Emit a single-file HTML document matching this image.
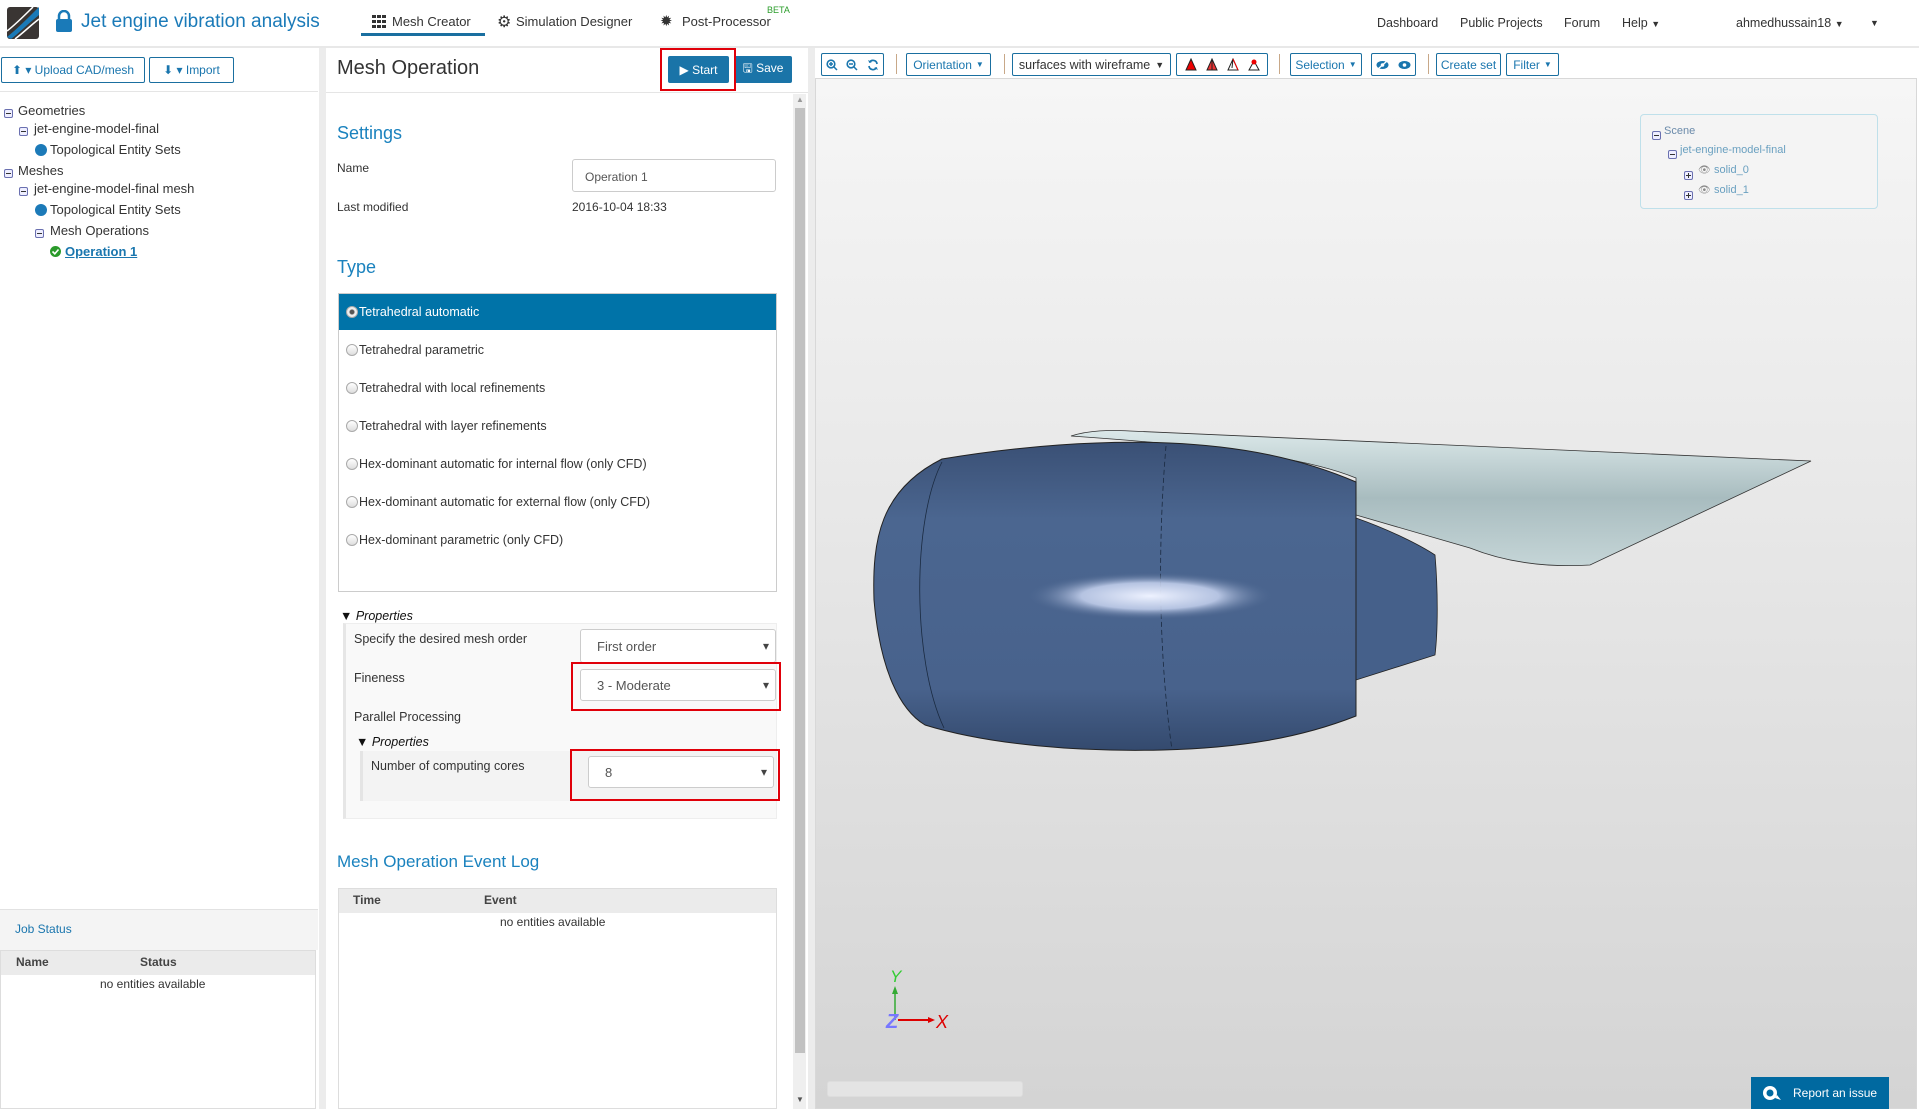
<!DOCTYPE html>
<html><head><meta charset="utf-8"><style>
*{box-sizing:border-box;margin:0;padding:0}
body{width:1919px;height:1109px;overflow:hidden;background:#fff;font-family:"Liberation Sans",Arial,sans-serif;font-size:13px;color:#333;position:relative}
.a{position:absolute;white-space:nowrap}
.btn{position:absolute;border:1px solid #1a6fa0;border-radius:2px;color:#1a76ae;background:#fff;font-size:12px;display:flex;align-items:center;justify-content:center}
.mi{display:inline-block;width:9px;height:9px;border:1px solid #6a70b0;border-radius:2px;position:relative;background:#eef}
.mi:after{content:"";position:absolute;left:1px;right:1px;top:3px;height:1px;background:#333}
.pi:before{content:"";position:absolute;top:1px;bottom:1px;left:3px;width:1px;background:#333}
.dot{display:inline-block;width:12px;height:12px;border-radius:50%;background:#1c7ab8}
.radio{display:inline-block;width:12px;height:12px;border-radius:50%;border:1px solid #aaa;background:linear-gradient(#fff,#ddd);vertical-align:-2px;margin-right:1px}
.sel{position:absolute;border:1px solid #ccc;border-radius:3px;background:#fff;font-size:13px;color:#555;padding-left:16px;display:flex;align-items:center}
.sel:after{content:"▾";position:absolute;right:6px;font-size:12px;color:#444}
.red{position:absolute;border:2px solid #e0000a}
.tb{position:absolute;top:53px;height:23px;border:1px solid #1a6fa0;border-radius:2px;background:#fff;color:#1a76ae;font-size:12px;display:flex;align-items:center;justify-content:center}
.sep{position:absolute;top:54px;width:1px;height:20px;background:#c8a888}
</style></head><body>

<!-- header -->
<div class="a" style="left:0;top:0;width:1919px;height:48px;border-bottom:2px solid #e8e8e8;background:#fff"></div>
<svg class="a" style="left:7px;top:7px" width="32" height="32" viewBox="0 0 32 32">
<rect width="32" height="32" rx="3" fill="#3a3533"/>
<path d="M0 30 C10 22 20 12 32 0 L32 8 C22 16 12 26 4 32 Z" fill="#1a7ab8"/>
<path d="M0 24 C8 18 18 8 26 0" stroke="#fff" stroke-width="1.5" fill="none"/>
<path d="M8 32 C16 26 24 18 32 12" stroke="#fff" stroke-width="1.5" fill="none"/>
</svg>
<svg class="a" style="left:56px;top:10px" width="16" height="22" viewBox="0 0 16 22"><path d="M3 10 V6 a5 5 0 0 1 10 0 V10" stroke="#1a7ab8" stroke-width="2.5" fill="none"/><rect x="0" y="9" width="16" height="13" rx="2" fill="#1a7ab8"/></svg>
<div class="a" style="left:81px;top:11px;font-size:19px;color:#1a7ab8">Jet engine vibration analysis</div>
<svg class="a" style="left:372px;top:15px" width="14" height="13" viewBox="0 0 14 13"><g fill="#333"><rect x="0" y="0" width="4" height="3"/><rect x="5" y="0" width="4" height="3"/><rect x="10" y="0" width="4" height="3"/><rect x="0" y="5" width="4" height="3"/><rect x="5" y="5" width="4" height="3"/><rect x="10" y="5" width="4" height="3"/><rect x="0" y="10" width="4" height="3"/><rect x="5" y="10" width="4" height="3"/><rect x="10" y="10" width="4" height="3"/></g></svg>
<div class="a" style="left:392px;top:14px;font-size:13px;color:#333">Mesh Creator</div>
<div class="a" style="left:361px;top:33px;width:124px;height:3px;background:#1a6fa0"></div>
<div class="a" style="left:497px;top:12px;font-size:16px;color:#333">⚙</div>
<div class="a" style="left:516px;top:14px;font-size:13px;color:#333">Simulation Designer</div>
<div class="a" style="left:660px;top:12px;font-size:15px;color:#333">✹</div>
<div class="a" style="left:682px;top:14px;font-size:13px;color:#333">Post-Processor</div>
<div class="a" style="left:767px;top:5px;font-size:9px;color:#2a9d2a">BETA</div>
<div class="a" style="left:1377px;top:16px;font-size:12.5px">Dashboard</div>
<div class="a" style="left:1460px;top:16px;font-size:12.5px">Public Projects</div>
<div class="a" style="left:1564px;top:16px;font-size:12.5px">Forum</div>
<div class="a" style="left:1622px;top:16px;font-size:12.5px">Help <span style="font-size:9px">▼</span></div>
<div class="a" style="left:1736px;top:16px;font-size:12.5px">ahmedhussain18 <span style="font-size:9px">▼</span></div>
<div class="a" style="left:1870px;top:18px;font-size:9px">▼</div>

<!-- left panel -->
<div class="btn" style="left:1px;top:57px;width:144px;height:26px">⬆ ▾ Upload CAD/mesh</div>
<div class="btn" style="left:149px;top:57px;width:85px;height:26px">⬇ ▾ Import</div>
<div class="a" style="left:0;top:91px;width:318px;height:1px;background:#e5e5e5"></div>
<div class="a" style="left:319px;top:48px;width:7px;height:1061px;background:#ececec"></div>
<div class="a" style="left:4px;top:106px"><span class="mi"></span></div><div class="a" style="left:18px;top:103px">Geometries</div>
<div class="a" style="left:19px;top:124px"><span class="mi"></span></div><div class="a" style="left:34px;top:121px">jet-engine-model-final</div>
<div class="a" style="left:35px;top:144px"><span class="dot"></span></div><div class="a" style="left:50px;top:142px">Topological Entity Sets</div>
<div class="a" style="left:4px;top:166px"><span class="mi"></span></div><div class="a" style="left:18px;top:163px">Meshes</div>
<div class="a" style="left:19px;top:184px"><span class="mi"></span></div><div class="a" style="left:34px;top:181px">jet-engine-model-final mesh</div>
<div class="a" style="left:35px;top:204px"><span class="dot"></span></div><div class="a" style="left:50px;top:202px">Topological Entity Sets</div>
<div class="a" style="left:35px;top:226px"><span class="mi"></span></div><div class="a" style="left:50px;top:223px">Mesh Operations</div>
<svg class="a" style="left:50px;top:246px" width="11" height="11" viewBox="0 0 11 11"><circle cx="5.5" cy="5.5" r="5.5" fill="#2a9a2a"/><path d="M2.5 5.5 L4.8 7.8 L8.5 3.5" stroke="#fff" stroke-width="1.6" fill="none"/></svg>
<div class="a" style="left:65px;top:244px;color:#1a76ae;font-weight:bold;text-decoration:underline">Operation 1</div>

<div class="a" style="left:0;top:909px;width:318px;height:41px;background:#f4f4f4;border-top:1px solid #e2e2e2"></div>
<div class="a" style="left:15px;top:922px;font-size:12px;color:#1a76ae">Job Status</div>
<div class="a" style="left:0;top:950px;width:316px;height:159px;border:1px solid #ddd;background:#fff"></div>
<div class="a" style="left:1px;top:951px;width:314px;height:24px;background:#ebebeb"></div>
<div class="a" style="left:16px;top:955px;font-weight:bold;font-size:12px;color:#444">Name</div>
<div class="a" style="left:140px;top:955px;font-weight:bold;font-size:12px;color:#444">Status</div>
<div class="a" style="left:100px;top:977px;font-size:12px">no entities available</div>

<!-- middle panel -->
<div class="a" style="left:337px;top:57px;font-size:20px;color:#333">Mesh Operation</div>
<div class="a" style="left:668px;top:56px;width:61px;height:27px;background:#1a74a8;color:#fff;font-size:12px;display:flex;align-items:center;justify-content:center;border-radius:2px">▶ Start</div>
<div class="a" style="left:734px;top:56px;width:58px;height:27px;background:#1a74a8;color:#fff;font-size:12px;display:flex;align-items:center;justify-content:center;border-radius:2px">🖫 Save</div>
<div class="red" style="left:660px;top:48px;width:76px;height:43px"></div>
<div class="a" style="left:326px;top:92px;width:482px;height:1px;background:#e5e5e5"></div>
<div class="a" style="left:793px;top:94px;width:13px;height:1015px;background:#efefef"></div>
<div class="a" style="left:795px;top:108px;width:10px;height:945px;background:#c1c1c1"></div>
<div class="a" style="left:796px;top:95px;font-size:8px;color:#999">▲</div>
<div class="a" style="left:796px;top:1095px;font-size:8px;color:#555">▼</div>
<div class="a" style="left:808px;top:48px;width:7px;height:1061px;background:#ececec"></div>

<div class="a" style="left:337px;top:123px;font-size:18px;color:#1a82be">Settings</div>
<div class="a" style="left:337px;top:161px;font-size:12px">Name</div>
<div class="a" style="left:572px;top:159px;width:204px;height:33px;border:1px solid #ccc;border-radius:3px;padding:10px 0 0 12px;font-size:12px;color:#555">Operation 1</div>
<div class="a" style="left:337px;top:200px;font-size:12px">Last modified</div>
<div class="a" style="left:572px;top:200px;font-size:12px">2016-10-04 18:33</div>
<div class="a" style="left:337px;top:257px;font-size:18px;color:#1a82be">Type</div>

<div class="a" style="left:338px;top:293px;width:439px;height:299px;border:1px solid #ccc;background:#fff"></div>
<div class="a" style="left:339px;top:294px;width:437px;height:36px;background:#0073a8"></div>
<div class="a" style="left:346px;top:305px;font-size:12.5px;color:#fff"><span class="radio" style="background:radial-gradient(#555 0 2px,#eee 3px)"></span>Tetrahedral automatic</div>
<div class="a" style="left:346px;top:343px;font-size:12.5px"><span class="radio"></span>Tetrahedral parametric</div>
<div class="a" style="left:346px;top:381px;font-size:12.5px"><span class="radio"></span>Tetrahedral with local refinements</div>
<div class="a" style="left:346px;top:419px;font-size:12.5px"><span class="radio"></span>Tetrahedral with layer refinements</div>
<div class="a" style="left:346px;top:457px;font-size:12.5px"><span class="radio"></span>Hex-dominant automatic for internal flow (only CFD)</div>
<div class="a" style="left:346px;top:495px;font-size:12.5px"><span class="radio"></span>Hex-dominant automatic for external flow (only CFD)</div>
<div class="a" style="left:346px;top:533px;font-size:12.5px"><span class="radio"></span>Hex-dominant parametric (only CFD)</div>

<div class="a" style="left:340px;top:609px;font-size:12.5px;font-style:italic;color:#111">▼ Properties</div>
<div class="a" style="left:343px;top:623px;width:434px;height:196px;border:1px solid #eee;border-left:3px solid #e6e6e6;background:#f9f9f9"></div>
<div class="a" style="left:354px;top:632px;font-size:12.5px">Specify the desired mesh order</div>
<div class="sel" style="left:580px;top:629px;width:196px;height:34px">First order</div>
<div class="a" style="left:354px;top:671px;font-size:12.5px">Fineness</div>
<div class="sel" style="left:580px;top:669px;width:196px;height:32px">3 - Moderate</div>
<div class="red" style="left:571px;top:662px;width:210px;height:49px"></div>
<div class="a" style="left:354px;top:710px;font-size:12.5px">Parallel Processing</div>
<div class="a" style="left:356px;top:735px;font-size:12.5px;font-style:italic;color:#111">▼ Properties</div>
<div class="a" style="left:360px;top:751px;width:416px;height:50px;border-left:3px solid #e4e4e4;background:#f3f3f3"></div>
<div class="a" style="left:371px;top:759px;font-size:12.5px">Number of computing cores</div>
<div class="sel" style="left:588px;top:756px;width:186px;height:32px">8</div>
<div class="red" style="left:570px;top:749px;width:210px;height:52px"></div>

<div class="a" style="left:337px;top:852px;font-size:17px;color:#1a82be">Mesh Operation Event Log</div>
<div class="a" style="left:338px;top:888px;width:439px;height:221px;border:1px solid #ddd;background:#fff"></div>
<div class="a" style="left:339px;top:889px;width:437px;height:24px;background:#ebebeb"></div>
<div class="a" style="left:353px;top:893px;font-weight:bold;font-size:12px;color:#444">Time</div>
<div class="a" style="left:484px;top:893px;font-weight:bold;font-size:12px;color:#444">Event</div>
<div class="a" style="left:500px;top:915px;font-size:12px">no entities available</div>

<!-- viewer -->
<div class="a" style="left:815px;top:48px;width:1104px;height:1061px;background:#fff"></div>
<div class="a" style="left:815px;top:78px;width:1102px;height:1031px;border:1px solid #d8d8d8;background:linear-gradient(#f6f6f6,#d4d4d4)"></div>
<div class="tb" style="left:821px;width:63px;justify-content:space-around">
<svg width="12" height="12" viewBox="0 0 12 12"><circle cx="5" cy="5" r="3.8" stroke="#1a76ae" stroke-width="1.6" fill="none"/><path d="M8 8 L11 11 M3 5 H7 M5 3 V7" stroke="#1a76ae" stroke-width="1.5"/></svg>
<svg width="12" height="12" viewBox="0 0 12 12"><circle cx="5" cy="5" r="3.8" stroke="#1a76ae" stroke-width="1.6" fill="none"/><path d="M8 8 L11 11 M3 5 H7" stroke="#1a76ae" stroke-width="1.5"/></svg>
<svg width="12" height="12" viewBox="0 0 12 12"><path d="M10 5 A4 4 0 0 0 2.5 3.5 M2 7 A4 4 0 0 0 9.5 8.5" stroke="#1a76ae" stroke-width="1.7" fill="none"/><path d="M1 1 L2.5 4 L5 3 Z M11 11 L9.5 8 L7 9 Z" fill="#1a76ae"/></svg>
</div>
<div class="sep" style="left:896px"></div>
<div class="tb" style="left:906px;width:85px">Orientation <span style="font-size:8px;margin-left:4px">▼</span></div>
<div class="sep" style="left:1004px"></div>
<div class="tb" style="left:1012px;width:159px;color:#333;font-size:12.5px">surfaces with wireframe <span style="font-size:9px;margin-left:5px">▼</span></div>
<div class="tb" style="left:1176px;width:92px;justify-content:space-around;padding:0 3px">
<svg width="14" height="14" viewBox="0 0 14 14"><path d="M7 1 L12 12 L2 12 Z" fill="#e00" stroke="#222"/></svg>
<svg width="14" height="14" viewBox="0 0 14 14"><path d="M7 1 L12 12 L2 12 Z M7 1 L7 12" fill="#e33" stroke="#222"/></svg>
<svg width="14" height="14" viewBox="0 0 14 14"><path d="M7 1 L12 12 L2 12 Z M7 1 L6 10" fill="none" stroke="#222"/><path d="M7 1 L12 12" stroke="#e00"/></svg>
<svg width="14" height="14" viewBox="0 0 14 14"><path d="M7 3 L12 12 L2 12 Z" fill="none" stroke="#222"/><circle cx="7" cy="4" r="2.5" fill="#e00"/></svg>
</div>
<div class="sep" style="left:1279px"></div>
<div class="tb" style="left:1290px;width:72px">Selection <span style="font-size:8px;margin-left:4px">▼</span></div>
<div class="tb" style="left:1371px;width:45px;justify-content:space-around">
<svg width="13" height="10" viewBox="0 0 13 10"><ellipse cx="6.5" cy="5" rx="6" ry="4" fill="#1a76ae"/><circle cx="6.5" cy="5" r="1.8" fill="#fff"/><path d="M2 9 L11 1" stroke="#fff" stroke-width="1.3"/></svg>
<svg width="13" height="10" viewBox="0 0 13 10"><ellipse cx="6.5" cy="5" rx="6" ry="4" fill="#1a76ae"/><circle cx="6.5" cy="5" r="1.8" fill="#fff"/></svg>
</div>
<div class="sep" style="left:1428px"></div>
<div class="tb" style="left:1436px;width:65px">Create set</div>
<div class="tb" style="left:1506px;width:53px">Filter <span style="font-size:8px;margin-left:4px">▼</span></div>

<!-- scene tree -->
<div class="a" style="left:1640px;top:114px;width:238px;height:95px;border:1px solid #bfe0ea;border-radius:4px;background:#f4f4f4"></div>
<div class="a" style="left:1652px;top:128px"><span class="mi"></span></div><div class="a" style="left:1664px;top:125px;font-size:11px;color:#6a8aaa">Scene</div>
<div class="a" style="left:1668px;top:147px"><span class="mi"></span></div><div class="a" style="left:1680px;top:144px;font-size:11px;color:#6aa0c0">jet-engine-model-final</div>
<div class="a" style="left:1684px;top:168px"><span class="mi pi"></span></div><div class="a" style="left:1698px;top:165px;font-size:10px;color:#888">👁</div><div class="a" style="left:1714px;top:164px;font-size:11px;color:#6aa0c0">solid_0</div>
<div class="a" style="left:1684px;top:188px"><span class="mi pi"></span></div><div class="a" style="left:1698px;top:185px;font-size:10px;color:#888">👁</div><div class="a" style="left:1714px;top:184px;font-size:11px;color:#6aa0c0">solid_1</div>

<!-- engine -->
<svg class="a" style="left:815px;top:78px" width="1104" height="1031" viewBox="815 78 1104 1031">
<defs>
<linearGradient id="wing" x1="0" y1="0" x2="0" y2="1"><stop offset="0" stop-color="#dbe8e9"/><stop offset="0.5" stop-color="#a8bcbf"/><stop offset="1" stop-color="#c5d5d7"/></linearGradient>
<radialGradient id="hl" cx="0.5" cy="0.5" r="0.5"><stop offset="0" stop-color="#eef2ff"/><stop offset="0.55" stop-color="#c8d4f0" stop-opacity="0.85"/><stop offset="1" stop-color="#48618a" stop-opacity="0"/></radialGradient>
<linearGradient id="nac" x1="0" y1="0" x2="0" y2="1"><stop offset="0" stop-color="#3a5075"/><stop offset="0.25" stop-color="#4b6690"/><stop offset="0.8" stop-color="#48628c"/><stop offset="1" stop-color="#344a6e"/></linearGradient>
</defs>
<path d="M1071 436 C1090 430 1110 430 1130 431 L1811 461 L1590 565 C1540 568 1500 560 1470 548 L1356 515 L1356 478 C1300 455 1200 445 1071 436 Z" fill="url(#wing)" stroke="#333" stroke-width="0.8"/>
<path d="M1356 518 C1390 530 1420 545 1435 555 C1438 590 1438 630 1435 655 L1356 680 Z" fill="#45608a" stroke="#222" stroke-width="0.8"/>
<path d="M942 459 C1020 446 1100 440 1169 443 C1240 446 1300 458 1356 482 L1356 716 C1300 738 1240 748 1163 750 C1080 752 990 745 925 725 C900 710 880 670 874 600 C872 540 880 490 942 459 Z" fill="url(#nac)" stroke="#222" stroke-width="1"/>
<path d="M942 462 C912 520 912 660 944 728" stroke="#1a2a40" stroke-width="0.8" fill="none"/>
<path d="M1166 446 C1158 540 1158 650 1172 750" stroke="#1a2a40" stroke-width="0.8" stroke-dasharray="5 3" fill="none"/>
<ellipse cx="1150" cy="596" rx="125" ry="24" fill="url(#hl)"/>
<path d="M895 1020 V992" stroke="#3a3" stroke-width="1.5"/><path d="M892 994 L895 986 L898 994 Z" fill="#3a3"/>
<path d="M898 1020 H930" stroke="#d00" stroke-width="2"/><path d="M928 1017 L935 1020 L928 1023 Z" fill="#d00"/>
<text x="890" y="982" font-family="Liberation Sans" font-style="italic" font-size="17" fill="#3c3">Y</text>
<text x="886" y="1028" font-family="Liberation Sans" font-style="italic" font-weight="bold" font-size="20" fill="#7777ff">Z</text>
<text x="936" y="1028" font-family="Liberation Sans" font-style="italic" font-size="18" fill="#d00">X</text>
</svg>
<div class="a" style="left:827px;top:1081px;width:196px;height:16px;border:1px solid #ddd;border-radius:3px;background:#e4e4e4"></div>
<div class="a" style="left:1751px;top:1077px;width:138px;height:32px;background:#0069a0;color:#fff;font-size:12px;display:flex;align-items:center;padding-left:10px"><svg width="22" height="16" viewBox="0 0 22 16" style="margin-right:10px"><circle cx="9" cy="8" r="7" fill="#fff"/><circle cx="9" cy="8" r="3.5" fill="#0069a0"/><path d="M14 13 L20 15 L16 10 Z" fill="#fff"/></svg>Report an issue</div>
</body></html>
